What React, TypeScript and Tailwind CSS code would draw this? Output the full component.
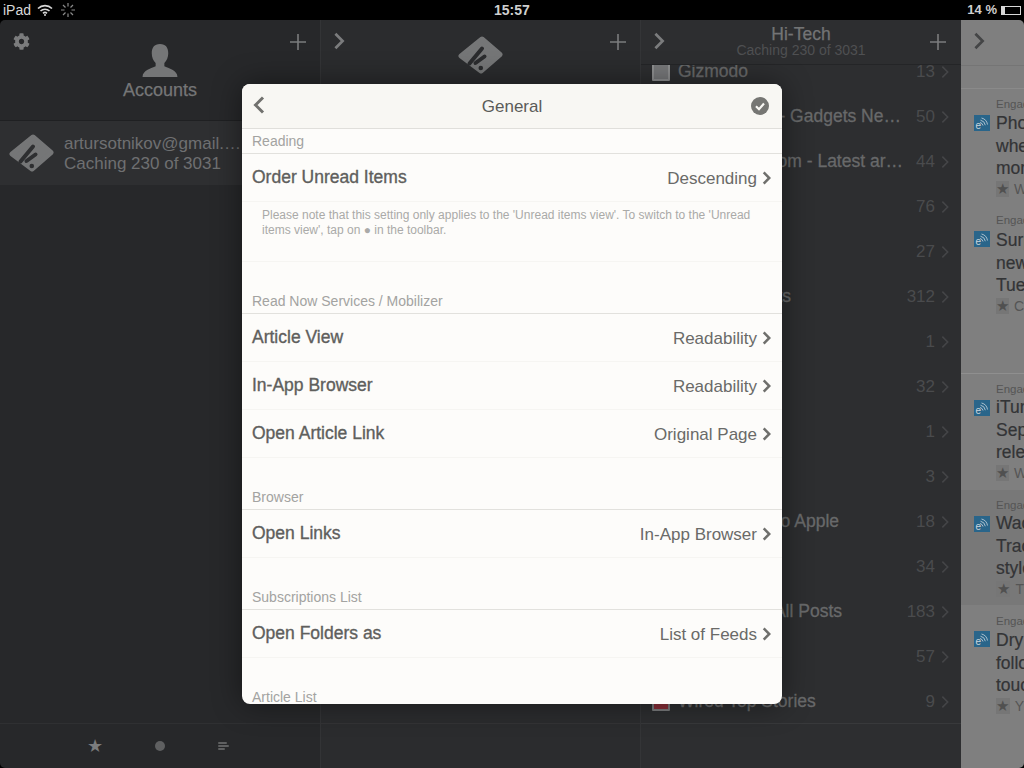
import React from "react";
import { FaCog } from "react-icons/fa";

const sans = { fontFamily: '"Liberation Sans", Arial, sans-serif' };

const Plus = () => (
  <svg width="16" height="16" viewBox="0 0 16 16" className="text-[#7b7c7d]">
    <path d="M8 0v16M0 8h16" stroke="currentColor" strokeWidth="1.6" />
  </svg>
);

const Chevron = ({ className, weight = 2.4 }: { className: string; weight?: number }) => (
  <svg viewBox="0 0 12 20" fill="none" className={className}>
    <path d="M2 2l8 8-8 8" stroke="currentColor" strokeWidth={weight} />
  </svg>
);

const FeedlyLogo = ({ w, h, fg, bg }: { w: number; h: number; fg: string; bg: string }) => (
  <svg width={w} height={h} viewBox="0 0 45 38">
    <path d="M24 3L42 18.500 23 35 3 20z" fill={fg} stroke={fg} strokeWidth="5" strokeLinejoin="round" />
    <path d="M11.500 27.500L24 12.500" stroke={bg} strokeWidth="4" strokeLinecap="round" />
    <path d="M17.500 27L26.500 20.500" stroke={bg} strokeWidth="4" strokeLinecap="round" />
    <circle cx="22.800" cy="32" r="2.300" fill={bg} />
  </svg>
);

const RssIcon = () => (
  <svg width="16" height="16" viewBox="0 0 16 16" className="shrink-0">
    <rect width="16" height="16" fill="#29658a" />
    <text x="1.500" y="14" fontSize="10" fill="#c9d6de" fontFamily="Liberation Sans">e</text>
    <path d="M6 7.500a4 4 0 0 1 3 3M6.500 5.200a6 6 0 0 1 4.800 5M7.500 3a8 8 0 0 1 6 6.500" fill="none" stroke="#c9d6de" strokeWidth="0.8" />
  </svg>
);

const feeds = [
  { name: "Gizmodo", count: "13", icon: "bg-[#77787a] border-2 border-[#8f9091]", w: "w-[120px]" },
  { name: "Engadget - Gadgets Ne…", count: "50", w: "w-[223px]", right: true },
  { name: "Phys.org.com - Latest ar…", count: "44", w: "w-[225px]", right: true },
  { name: "Ars Technica", count: "76", w: "w-[100px]" },
  { name: "CNET", count: "27", w: "w-[100px]" },
  { name: "The Verge Posts", count: "312", w: "w-[113px]", right: true },
  { name: "Lifehacker", count: "1", w: "w-[100px]" },
  { name: "TechRadar", count: "32", w: "w-[100px]" },
  { name: "Mashable", count: "1", w: "w-[100px]" },
  { name: "Slashdot", count: "3", w: "w-[100px]" },
  { name: "Guide to Apple", count: "18", w: "w-[161px]", right: true },
  { name: "ReadWrite", count: "34", w: "w-[100px]" },
  { name: "TechCrunch All Posts", count: "183", w: "w-[164px]", right: true },
  { name: "Wired", count: "57", w: "w-[100px]" },
  { name: "Wired Top Stories", count: "9", icon: "bg-[#8a2f38] border-2 border-[#7b7c7d]", w: "w-[150px]" },
];

const articles = [
  { src: "Engadget", lines: ["Photo", "when", "more"], meta: "W", h: "h-[116px]", bg: "pt-[8px]", gap: "mt-[1px]" },
  { src: "Engadget", lines: ["Surprise", "new", "Tuesday"], meta: "C", h: "h-[168px]", bg: "pt-[8px]", gap: "mt-[2px]" },
  { src: "Engadget", lines: ["iTunes", "Sept", "release"], meta: "W", h: "h-[117px]", bg: "border-t border-[#8f8f8f] pt-[8px]", gap: "mt-0" },
  { src: "Engadget", lines: ["Wacom", "Track", "style"], meta: "T", h: "h-[115px]", bg: "bg-[#787878] pt-[8px]", gap: "mt-0" },
  { src: "Engadget", lines: ["Dry", "follow", "touch"], meta: "Y", h: "h-[118px]", bg: "pt-[9px]", gap: "mt-[1px]" },
];

const SectionLabel = ({ label, first }: { label: string; first?: boolean }) => (
  <div className={`flex h-[25px] shrink-0 items-center border-b border-[#e2e1dd] pl-[10px] pt-[1px] text-[14px] text-[#a3a3a1] ${first ? "" : "mt-[27px]"}`}>
    {label}
  </div>
);

const SettingRow = ({ label, value }: { label: string; value: string }) => (
  <div className="flex h-12 shrink-0 items-center border-b border-[#f6f5f2] pl-[10px] pr-[11px] pt-[1px]">
    <span className="-mt-[2px] text-[17.500px] text-[#5f5f5d] [-webkit-text-stroke:0.35px_#5f5f5d]">{label}</span>
    <span className="ml-auto mt-[2px] text-[17px] text-[#6a6a68]">{value}</span>
    <Chevron weight={3.6} className="ml-[5px] h-[14px] w-[9px] text-[#6f6f6c]" />
  </div>
);

const Modal = () => (
  <div className="absolute left-[242px] top-[84px] z-20 flex h-[620px] w-[540px] flex-col overflow-hidden rounded-[8px] bg-[#fdfcfa] shadow-[0_0_30px_rgba(0,0,0,0.45)]">
    <div className="relative flex h-[45px] shrink-0 items-center justify-center border-b border-[#e0dfdb] bg-[#f8f7f3] pt-[1px]">
      <svg width="12" height="18" viewBox="0 0 12 18" fill="none" className="absolute left-[11px] top-[12px] text-[#71716e]">
        <path d="M10 1.500L2.500 9l7.500 7.500" stroke="currentColor" strokeWidth="3" />
      </svg>
      <span className="text-[17px] text-[#5b5b59]">General</span>
      <svg width="18" height="18" viewBox="0 0 18 18" className="absolute right-[13px] top-[13px]">
        <circle cx="9" cy="9" r="9" fill="#767673" />
        <path d="M5 9.200l3 3 5-5.600" fill="none" stroke="#f8f7f3" strokeWidth="2.200" />
      </svg>
    </div>
    <SectionLabel label="Reading" first />
    <SettingRow label="Order Unread Items" value="Descending" />
    <div className="h-[60px] shrink-0 border-b border-[#f6f5f2] pl-5 pr-7 pt-[6px] text-[12px] leading-[15px] text-[#aaaaa8]">
      Please note that this setting only applies to the 'Unread items view'. To switch to the 'Unread items view', tap on ● in the toolbar.
    </div>
    <SectionLabel label="Read Now Services / Mobilizer" />
    <SettingRow label="Article View" value="Readability" />
    <SettingRow label="In-App Browser" value="Readability" />
    <SettingRow label="Open Article Link" value="Original Page" />
    <SectionLabel label="Browser" />
    <SettingRow label="Open Links" value="In-App Browser" />
    <SectionLabel label="Subscriptions List" />
    <SettingRow label="Open Folders as" value="List of Feeds" />
    <SectionLabel label="Article List" />
  </div>
);

const App = () => (
  <div className="relative h-[768px] w-[1024px] overflow-hidden bg-black" style={sans}>
    <div className="relative flex h-5 items-center px-[3px] text-[14px] text-[#d8d8d8]">
      <span>iPad</span>
      <svg width="16" height="12" viewBox="0 0 16 12" fill="none" className="ml-[6px] text-[#d8d8d8]">
        <path d="M1 4.500a10 10 0 0 1 14 0M3.500 7a6.500 6.500 0 0 1 9 0M6 9.300a3 3 0 0 1 4 0" stroke="currentColor" strokeWidth="1.600" />
        <circle cx="8" cy="11" r="1" fill="currentColor" />
      </svg>
      <svg width="14" height="14" viewBox="0 0 14 14" className="ml-[8px] text-[#8a8a8a]">
        <path d="M7 0v3.500M7 10.500V14M0 7h3.500M10.500 7H14M2 2l2.500 2.500M9.500 9.500L12 12M2 12l2.500-2.500M9.500 4.500L12 2" stroke="currentColor" strokeWidth="1.200" />
      </svg>
      <span className="absolute left-[494px] top-0 text-[14px] font-bold leading-5 text-[#cfcfcf]">15:57</span>
      <span className="ml-auto text-[13px] font-bold text-[#cfcfcf]">14 %</span>
      <div className="ml-[4px] h-[9px] w-[20px] border border-[#d8d8d8]">
        <div className="h-full w-[3px] bg-[#d8d8d8]" />
      </div>
    </div>

    <div className="flex h-[748px] overflow-hidden rounded-[5px]">
      {/* accounts */}
      <div className="flex w-[321px] shrink-0 flex-col border-r border-[#333436] bg-[#27282a]">
        <div className="relative flex h-[101px] shrink-0 flex-col items-center border-b border-[#1f2022] pt-[24px]">
          <FaCog className="absolute left-[13px] top-[13px] text-[17px] text-[#7b7c7d]" />
          <div className="absolute right-[14px] top-[14px]"><Plus /></div>
          <svg width="36" height="33" viewBox="0 0 36 34" className="text-[#757677]">
            <path d="M18 0c6 0 8.500 4 8.500 9.500 0 4-1.500 7.500-4 10v3.500c4 2 13.500 4 13.500 11H0c0-7 9.500-9 13.500-11v-3.500c-2.500-2.500-4-6-4-10C9.500 4 12 0 18 0z" fill="currentColor" />
          </svg>
          <span className="text-[18px] leading-[26px] text-[#757677] [-webkit-text-stroke:0.25px_#757677]">Accounts</span>
        </div>
        <div className="flex h-[64px] shrink-0 items-center bg-[#2e2f31]">
          <div className="ml-[9px] flex shrink-0"><FeedlyLogo w={45} h={38} fg="#757677" bg="#2e2f31" /></div>
          <div className="ml-[10px] min-w-0 pt-[2px] text-[17px] leading-[20px] text-[#6f7071]">
            <div className="whitespace-nowrap">artursotnikov@gmail.…</div>
            <div className="whitespace-nowrap">Caching 230 of 3031</div>
          </div>
        </div>
        <div className="flex-1" />
        <div className="flex h-[45px] shrink-0 items-center border-t border-[#2f3032]">
          <span className="ml-[87px] text-[18px] leading-none text-[#7b7c7d]">★</span>
          <span className="ml-[52px] h-[10px] w-[10px] rounded-full bg-[#5f6061]" />
          <div className="ml-[53px] flex flex-col gap-[1px]">
            <span className="h-[2px] w-[9px] rounded-full bg-[#5f6061]" />
            <span className="h-[2px] w-[11px] rounded-full bg-[#5f6061]" />
            <span className="h-[2px] w-[7px] rounded-full bg-[#5f6061]" />
          </div>
        </div>
      </div>

      {/* feedly column */}
      <div className="flex w-[320px] shrink-0 flex-col border-r border-[#343537] bg-[#2b2c2e]">
        <div className="relative flex h-[101px] shrink-0 justify-center border-b border-[#232426] pt-[16px]">
          <Chevron weight={3} className="absolute left-[12px] top-[12px] h-[18px] w-[12px] text-[#7b7c7d]" />
          <div className="absolute right-[14px] top-[14px]"><Plus /></div>
          <div className="h-[38px]"><FeedlyLogo w={45} h={38} fg="#757677" bg="#2b2c2e" /></div>
        </div>
        <div className="flex-1" />
        <div className="h-[45px] shrink-0 border-t border-[#333436]" />
      </div>

      {/* hi-tech column */}
      <div className="flex w-[320px] shrink-0 flex-col bg-[#2d2e30]">
        <div className="relative z-10 flex h-[45px] shrink-0 flex-col items-center border-b border-[#242527] bg-[#2d2e30] pt-[5px]">
          <Chevron weight={3} className="absolute left-[12px] top-[12px] h-[18px] w-[12px] text-[#7b7c7d]" />
          <div className="absolute right-[15px] top-[14px]"><Plus /></div>
          <span className="text-[17.500px] leading-[18px] text-[#737475] [-webkit-text-stroke:0.25px_#737475]">Hi-Tech</span>
          <span className="text-[14px] leading-[14px] text-[#4f5052]">Caching 230 of 3031</span>
        </div>
        <div className="-mt-[16px] min-h-0 flex-1 overflow-hidden">
          {feeds.map((feed) => (
            <div key={feed.name} className="flex h-[45px] items-center pl-[11px] pr-[12px]">
              {feed.icon ? <span className={`mr-2 h-[18px] w-[18px] shrink-0 rounded-[1px] ${feed.icon}`} /> : <span className="mr-2 w-[18px] shrink-0" />}
              <span className={`whitespace-nowrap text-[17.500px] text-[#68696a] [-webkit-text-stroke:0.3px_#68696a] ${feed.w} ${feed.right ? "flex justify-end" : ""}`}>
                {feed.name}
              </span>
              <span className="ml-auto text-[17px] text-[#4a4b4d]">{feed.count}</span>
              <Chevron className="ml-[6px] h-[14px] w-[8px] text-[#444547]" />
            </div>
          ))}
        </div>
        <div className="z-10 h-[45px] shrink-0 border-t border-[#38393b] bg-[#2d2e30]" />
      </div>

      {/* article column */}
      <div className="flex min-w-0 flex-1 flex-col overflow-hidden bg-[#7f7f7f]">
        <div className="relative h-[45px] shrink-0">
          <Chevron weight={3} className="absolute left-[12px] top-[12px] h-[18px] w-[12px] text-[#444546]" />
        </div>
        <div className="h-[24px] shrink-0 border-y border-[#8a8a8a] border-t-[#757575]" />
        {articles.map((a, i) => (
          <div key={i} className={`relative shrink-0 overflow-hidden whitespace-nowrap pl-[35px] ${a.h} ${a.bg}`}>
            <div className="text-[11.500px] leading-[14px] text-[#555]">{a.src}</div>
            <div className="absolute left-[13px] top-[26px]"><RssIcon /></div>
            <div className={a.gap}>
              {a.lines.map((line) => (
                <div key={line} className="text-[17.500px] leading-[22.500px] text-[#333436] [-webkit-text-stroke:0.2px_#333436]">{line}</div>
              ))}
            </div>
            <div className="-mt-[1px] flex items-center">
              <span className="flex h-[16px] w-[21px] items-center justify-center bg-[#767676] text-[15px] text-[#505050]">★</span>
              <span className="ml-[5px] text-[14px] text-[#555]">{a.meta}</span>
            </div>
          </div>
        ))}
        <div className="flex-1" />
      </div>
    </div>

    <Modal />
  </div>
);

export default App;
